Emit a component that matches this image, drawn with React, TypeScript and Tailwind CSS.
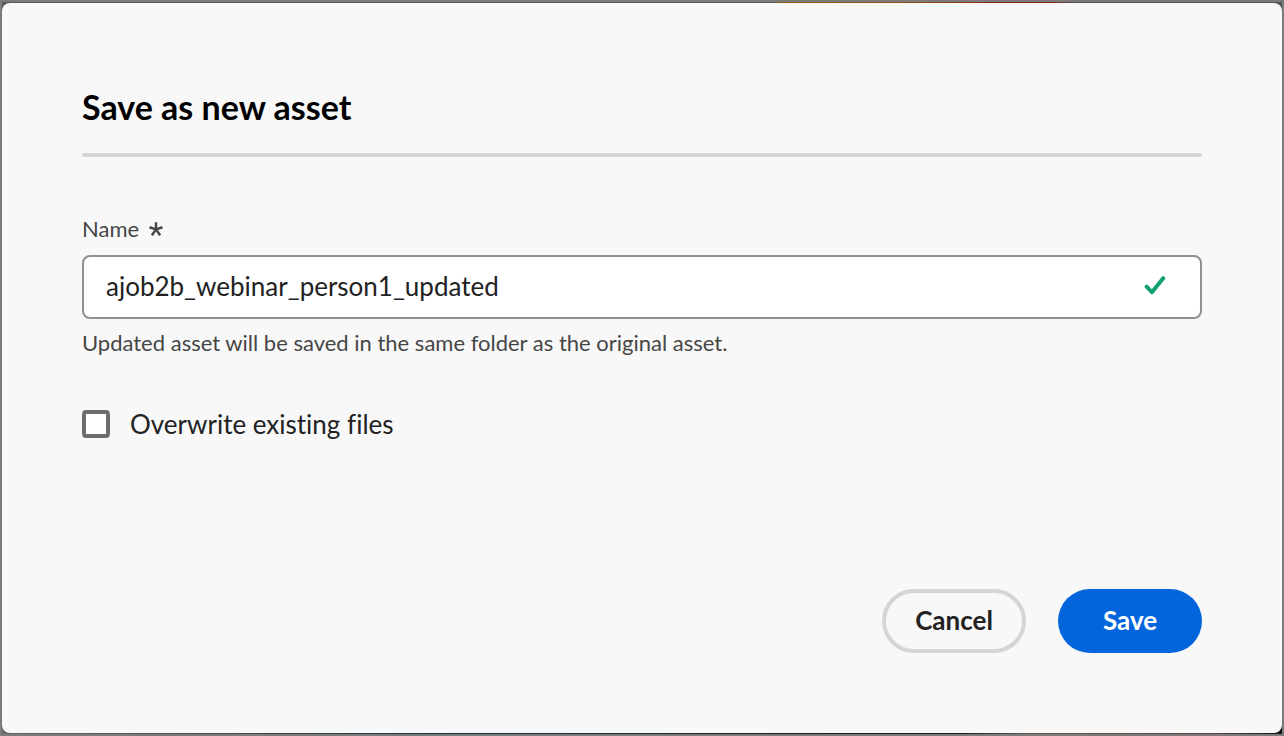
import { useState } from "react";

function CheckmarkIcon() {
  return (
    <svg width="22" height="20" viewBox="0 0 22 20" fill="none" aria-hidden="true" className="shrink-0">
      <path d="M2.6 10.6 L7.9 16.2 L19.2 2.2" stroke="#12a26f" strokeWidth="4" strokeLinecap="round" strokeLinejoin="round" />
    </svg>
  );
}

function RequiredIcon() {
  return (
    <svg width="14" height="14" viewBox="0 0 14 14" fill="none" aria-hidden="true">
      <path d="M7 7.4V0.2M7 7.4L0.5 5.2M7 7.4L13.5 5.2M7 7.4L2.9 13.3M7 7.4L11.1 13.3" stroke="#464646" strokeWidth="2.5" />
    </svg>
  );
}

export default function App() {
  const [name, setName] = useState("ajob2b_webinar_person1_updated");
  const [overwrite, setOverwrite] = useState(false);

  return (
    <div className="flex min-h-screen bg-[#7b7b7b] p-0.5 font-['Lato','Noto_Sans',sans-serif] text-[#222222] [font-variant-ligatures:none]">
      <div className="flex grow bg-[linear-gradient(90deg,#555a5a_0%,#555a5a_60%,#92600a_61%,#965010_70%,#8a2814_77%,#8a2814_82%,#505454_84%,#505454_100%)]">
        <div className="flex grow bg-[linear-gradient(90deg,#686868,#173040_35%,#141c20_75%,#6a574a_80%,#5c4339_95%,#111_100%)] bg-[length:100%_50%] bg-bottom bg-no-repeat py-px">
          <form
            role="dialog"
            aria-labelledby="dialog-title"
            onSubmit={(event) => event.preventDefault()}
            className="flex grow flex-col rounded-lg bg-[#f8f8f8] p-20"
          >
            <h1 id="dialog-title" className="text-[34px] leading-12 font-bold text-black">
              Save as new asset
            </h1>
            <hr className="mt-[22px] h-1 rounded-full border-0 bg-[#d5d5d5]" />

            <label htmlFor="asset-name" className="mt-14 flex items-center gap-2.5 text-[22px] leading-8 text-[#464646]">
              Name
              <RequiredIcon />
            </label>
            <div className="mt-2.5 flex h-16 items-center rounded-lg border-2 border-[#909090] bg-white pr-[34px] pb-0.5 pl-[22px]">
              <input
                id="asset-name"
                required
                aria-describedby="asset-help"
                value={name}
                onChange={(event) => setName(event.target.value)}
                className="min-w-0 grow bg-transparent text-[26px] leading-9 outline-none"
              />
              <CheckmarkIcon />
            </div>
            <p id="asset-help" className="mt-2 text-[22px] leading-8 text-[#464646]">
              Updated asset will be saved in the same folder as the original asset.
            </p>

            <div className="mt-[47px] flex items-center gap-5">
              <input
                id="overwrite"
                type="checkbox"
                checked={overwrite}
                onChange={(event) => setOverwrite(event.target.checked)}
                className="size-7 shrink-0 appearance-none rounded-sm border-4 border-[#6e6e6e] bg-white checked:bg-[#6e6e6e]"
              />
              <label htmlFor="overwrite" className="text-[26px] leading-9">
                Overwrite existing files
              </label>
            </div>

            <div className="mt-auto flex justify-end gap-8">
              <button type="button" className="h-16 w-36 rounded-full border-4 border-[#d5d5d5] pb-0.5 text-[26px] font-bold">
                Cancel
              </button>
              <button type="submit" className="h-16 w-36 rounded-full bg-[#0265dc] pb-0.5 text-[26px] font-bold text-white">
                Save
              </button>
            </div>
          </form>
        </div>
      </div>
    </div>
  );
}
